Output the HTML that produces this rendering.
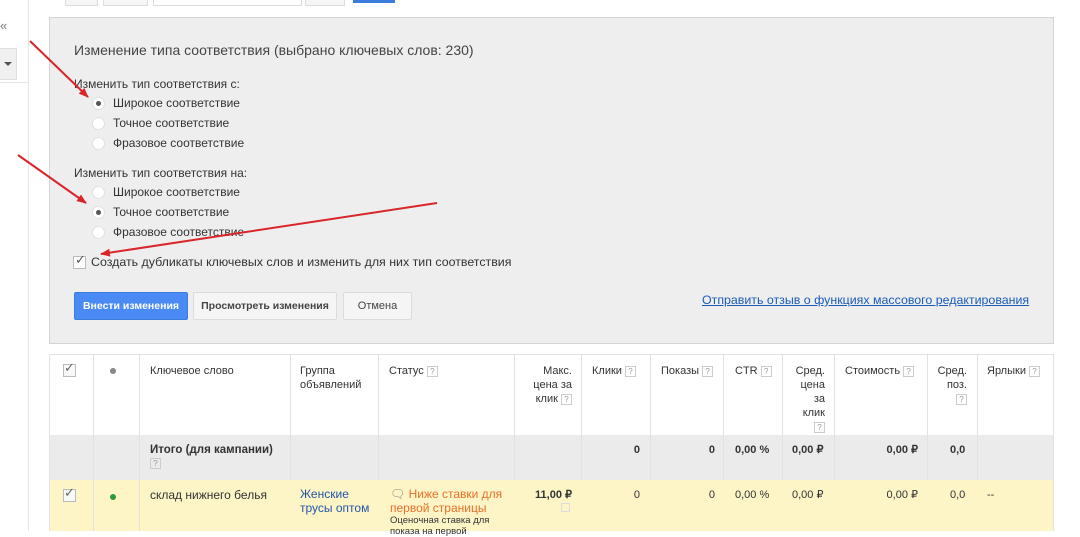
<!DOCTYPE html>
<html><head><meta charset="utf-8"><style>
*{box-sizing:border-box;margin:0;padding:0}
body{width:1080px;height:531px;overflow:hidden;background:#fff;font-family:"Liberation Sans",Arial,sans-serif;color:#333;position:relative}
.abs{position:absolute}
.panel{left:49px;top:17px;width:1005px;height:327px;background:#eee;border:1px solid #d4d4d4}
.t{font-size:12px;color:#333;white-space:nowrap}
.radio{width:13px;height:13px;border-radius:50%;background:#fff;border:1px solid #e0e0e0}
.radio.on::after{content:"";position:absolute;left:3px;top:3px;width:5px;height:5px;border-radius:50%;background:#555}
.btn{height:28px;border:1px solid #dcdcdc;background:#f5f5f5;font-size:10.5px;font-weight:bold;color:#444;display:flex;align-items:center;justify-content:center;border-radius:2px}
.q{display:inline-block;width:11px;height:11px;border:1px solid #ccc;font-size:8px;color:#999;text-align:center;line-height:9px;vertical-align:middle;font-weight:normal}
.cell{position:absolute;font-size:11px;color:#333;line-height:14px}
.vl{position:absolute;width:1px;background:#e2e2e2}
.cb{position:absolute;width:13px;height:13px;border:1px solid #bbb;background:#f8f8f8}
</style></head><body>
<div class="abs" style="left:65px;top:0;width:33px;height:6px;border:1px solid #ddd;border-top:none;background:#f5f5f5"></div>
<div class="abs" style="left:103px;top:0;width:45px;height:6px;border:1px solid #ddd;border-top:none;background:#f5f5f5"></div>
<div class="abs" style="left:153px;top:0;width:149px;height:6px;border:1px solid #ddd;border-top:none;background:#fff"></div>
<div class="abs" style="left:305px;top:0;width:40px;height:6px;border:1px solid #ddd;border-top:none;background:#f5f5f5"></div>
<div class="abs" style="left:353px;top:0;width:42px;height:3px;background:#3b7ddd"></div>
<div class="abs" style="left:28px;top:0;width:1px;height:531px;background:#e6e6e6"></div>
<div class="abs t" style="left:0;top:18px;color:#777;font-size:13px">«</div>
<div class="abs" style="left:0;top:48px;width:17px;height:32px;background:#f0f0f0;border:1px solid #e0e0e0;border-left:none"></div>
<div class="abs" style="left:4px;top:62px;border-left:4px solid transparent;border-right:4px solid transparent;border-top:4px solid #555"></div>
<div class="abs" style="left:0;top:82px;width:28px;height:1px;background:#e6e6e6"></div>
<div class="abs panel"></div>
<div class="abs t" style="left:74px;top:42px;font-size:14px;color:#444">Изменение типа соответствия (выбрано ключевых слов: 230)</div>
<div class="abs t" style="left:74px;top:77px">Изменить тип соответствия с:</div>
<div class="abs radio on" style="left:92px;top:97px"></div><div class="abs t" style="left:113px;top:96px">Широкое соответствие</div>
<div class="abs radio" style="left:92px;top:117px"></div><div class="abs t" style="left:113px;top:116px">Точное соответствие</div>
<div class="abs radio" style="left:92px;top:137px"></div><div class="abs t" style="left:113px;top:136px">Фразовое соответствие</div>
<div class="abs t" style="left:74px;top:166px">Изменить тип соответствия на:</div>
<div class="abs radio" style="left:92px;top:186px"></div><div class="abs t" style="left:113px;top:185px">Широкое соответствие</div>
<div class="abs radio on" style="left:92px;top:206px"></div><div class="abs t" style="left:113px;top:205px">Точное соответствие</div>
<div class="abs radio" style="left:92px;top:226px"></div><div class="abs t" style="left:113px;top:225px">Фразовое соответствие</div>
<div class="abs cb" style="left:73px;top:256px;background:#fff"></div>
<div class="abs" style="left:75px;top:252px;font-size:13px;color:#555">✓</div>
<div class="abs t" style="left:91px;top:255px;font-size:12.4px">Создать дубликаты ключевых слов и изменить для них тип соответствия</div>
<div class="abs btn" style="left:74px;top:292px;width:114px;background:#4a8af4;border-color:#3b7ddd;color:#fff">Внести изменения</div>
<div class="abs btn" style="left:193px;top:292px;width:144px">Просмотреть изменения</div>
<div class="abs btn" style="left:343px;top:292px;width:69px;font-weight:normal;font-size:11px">Отмена</div>
<div class="abs t" style="left:702px;top:293px;color:#1a5bb8;text-decoration:underline;font-size:12.4px">Отправить отзыв о функциях массового редактирования</div>
<div class="abs" style="left:49px;top:354px;width:1005px;height:1px;background:#e2e2e2"></div>
<div class="abs" style="left:49px;top:435px;width:1005px;height:45px;background:#ebebeb"></div>
<div class="abs" style="left:49px;top:480px;width:1005px;height:51px;background:#fdf5c6"></div>
<div class="vl" style="left:49px;top:354px;height:177px"></div>
<div class="vl" style="left:93px;top:354px;height:177px"></div>
<div class="vl" style="left:139px;top:354px;height:177px"></div>
<div class="vl" style="left:290px;top:354px;height:126px"></div>
<div class="vl" style="left:378px;top:354px;height:126px"></div>
<div class="vl" style="left:514px;top:354px;height:126px"></div>
<div class="vl" style="left:581px;top:354px;height:126px"></div>
<div class="vl" style="left:650px;top:354px;height:126px"></div>
<div class="vl" style="left:723px;top:354px;height:126px"></div>
<div class="vl" style="left:782px;top:354px;height:126px"></div>
<div class="vl" style="left:834px;top:354px;height:126px"></div>
<div class="vl" style="left:927px;top:354px;height:126px"></div>
<div class="vl" style="left:977px;top:354px;height:126px"></div>
<div class="vl" style="left:1053px;top:354px;height:177px"></div>
<div class="cb" style="left:63px;top:364px"></div><div class="abs" style="left:64px;top:360px;font-size:13px;color:#666">✓</div>
<div class="abs" style="left:110px;top:368px;width:6px;height:6px;border-radius:50%;background:#888"></div>
<div class="cell" style="left:150px;top:364px">Ключевое слово</div>
<div class="cell" style="left:300px;top:364px">Группа<br>объявлений</div>
<div class="cell" style="left:389px;top:364px">Статус <span class="q">?</span></div>
<div class="cell" style="left:514px;top:364px;width:58px;text-align:right">Макс.<br>цена за<br>клик <span class="q">?</span></div>
<div class="cell" style="left:592px;top:364px">Клики <span class="q">?</span></div>
<div class="cell" style="left:661px;top:364px">Показы <span class="q">?</span></div>
<div class="cell" style="left:735px;top:364px">CTR <span class="q">?</span></div>
<div class="cell" style="left:782px;top:364px;width:43px;text-align:right">Сред.<br>цена<br>за<br>клик<br><span class="q">?</span></div>
<div class="cell" style="left:845px;top:364px">Стоимость <span class="q">?</span></div>
<div class="cell" style="left:927px;top:364px;width:40px;text-align:right">Сред.<br>поз.<br><span class="q">?</span></div>
<div class="cell" style="left:987px;top:364px">Ярлыки <span class="q">?</span></div>
<div class="cell" style="left:150px;top:443px;font-weight:bold;font-size:11.5px">Итого (для кампании)<br><span class="q">?</span></div>
<div class="cell" style="left:581px;top:443px;width:59px;text-align:right;font-weight:bold">0</div>
<div class="cell" style="left:650px;top:443px;width:65px;text-align:right;font-weight:bold">0</div>
<div class="cell" style="left:735px;top:443px;font-weight:bold">0,00 %</div>
<div class="cell" style="left:792px;top:443px;font-weight:bold">0,00 ₽</div>
<div class="cell" style="left:834px;top:443px;width:84px;text-align:right;font-weight:bold">0,00 ₽</div>
<div class="cell" style="left:950px;top:443px;font-weight:bold">0,0</div>
<div class="cb" style="left:63px;top:489px"></div><div class="abs" style="left:64px;top:485px;font-size:13px;color:#666">✓</div>
<div class="abs" style="left:110px;top:494px;width:6px;height:6px;border-radius:50%;background:#2a9a3a"></div>
<div class="cell" style="left:150px;top:488px;font-size:12px">склад нижнего белья</div>
<div class="cell" style="left:300px;top:487px;color:#2255aa;font-size:12px">Женские<br>трусы оптом</div>
<div class="cell" style="left:390px;top:487px;color:#e8702a;font-size:12px"><span style="color:#888">🗨</span> Ниже ставки для<br>первой страницы</div>
<div class="cell" style="left:390px;top:515px;font-size:9.5px;line-height:11px">Оценочная ставка для<br>показа на первой</div>
<div class="cell" style="left:514px;top:488px;width:58px;text-align:right;font-weight:bold">11,00 ₽</div>
<div class="abs" style="left:561px;top:503px;width:9px;height:9px;border:1px solid #ddd"></div>
<div class="cell" style="left:581px;top:488px;width:59px;text-align:right">0</div>
<div class="cell" style="left:650px;top:488px;width:65px;text-align:right">0</div>
<div class="cell" style="left:735px;top:488px">0,00 %</div>
<div class="cell" style="left:792px;top:488px">0,00 ₽</div>
<div class="cell" style="left:834px;top:488px;width:84px;text-align:right">0,00 ₽</div>
<div class="cell" style="left:950px;top:488px">0,0</div>
<div class="cell" style="left:987px;top:488px">--</div>
<svg class="abs" style="left:0;top:0" width="1080" height="531">
<defs><marker id="ah" markerWidth="10" markerHeight="8" refX="9" refY="4" orient="auto" markerUnits="userSpaceOnUse"><path d="M0,0 L10,4 L0,8 Z" fill="#d8262a"/></marker></defs>
<g stroke="#d8262a" stroke-width="2" fill="none">
<line x1="30" y1="41" x2="88" y2="97" marker-end="url(#ah)"/>
<line x1="18" y1="155" x2="86" y2="203" marker-end="url(#ah)"/>
<line x1="437" y1="203" x2="101" y2="254" marker-end="url(#ah)"/>
</g></svg>
</body></html>
